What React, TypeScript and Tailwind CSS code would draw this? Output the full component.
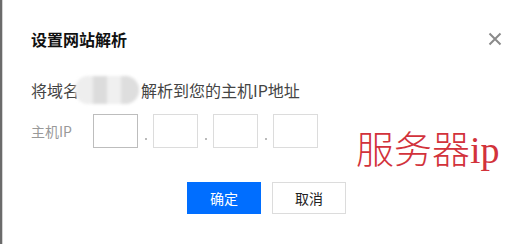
export default function App() {
  const octets = [0, 1, 2, 3];

  return (
    <div className="relative flex w-[523px] h-[244px] bg-white overflow-hidden font-['Noto_Sans_CJK_SC','Noto_Sans',sans-serif]">
      {/* left window edge */}
      <div className="w-[2px] h-full bg-[#6b6b6b]" />
      <div className="w-[1px] h-full bg-[#d4d4d4]" />

      <div className="flex-1 flex flex-col pl-[28px] pr-[18px]">
        {/* Header */}
        <div className="mt-[27px] flex items-center justify-between h-6">
          <h2 className="text-[16px] leading-6 font-bold text-[#111]">设置网站解析</h2>
          <svg width="14" height="14" viewBox="0 0 14 14" className="mr-[3px]">
            <path d="M1.5 1.5 L12.5 12.5 M12.5 1.5 L1.5 12.5" stroke="#8a8a8a" strokeWidth="2" />
          </svg>
        </div>

        {/* Description */}
        <div className="mt-[27px] flex items-center h-6 text-[16px] leading-6 text-[#444]">
          <span>将域名</span>
          <span className="-ml-[4px] mr-[2px] inline-flex h-[28px] w-[64px] rounded-full bg-[#e6e6e6] blur-[1.5px] overflow-hidden">
            <span className="w-[18px] h-full bg-[#eeeeee]" />
            <span className="w-[14px] h-full bg-[#dcdcdc]" />
            <span className="w-[14px] h-full bg-[#f0f0f0]" />
            <span className="w-[18px] h-full bg-[#dedede]" />
          </span>
          <span>解析到您的主机IP地址</span>
        </div>

        {/* IP row */}
        <div className="mt-[12px] flex items-center h-[34px]">
          <span className="w-[62px] text-[14px] text-[#999]">主机IP</span>
          {octets.map((i) => (
            <div key={i} className="flex items-end h-full">
              {i > 0 && <span className="w-[15px] flex justify-center pb-[8px]"><span className="w-[2px] h-[2px] bg-[#bbb]" /></span>}
              <div className={`w-[45px] h-[34px] border ${i === 0 ? "border-[#bdbdbd]" : "border-[#dcdcdc]"}`} />
            </div>
          ))}
        </div>

        {/* Actions */}
        <div className="mt-[34px] flex gap-[11px] pl-[156px]">
          <button className="w-[74px] h-[32px] bg-[#006eff] text-white text-[14px]">确定</button>
          <button className="w-[74px] h-[32px] bg-white border border-[#dcdcdc] text-[#222] text-[14px]">取消</button>
        </div>
      </div>

      {/* red annotation */}
      <span className="absolute left-[356px] top-[131px] text-[38px] leading-none text-[#d2323b] font-light font-['Liberation_Serif','Noto_Sans_CJK_SC',serif]">
        服务器ip
      </span>
    </div>
  );
}
